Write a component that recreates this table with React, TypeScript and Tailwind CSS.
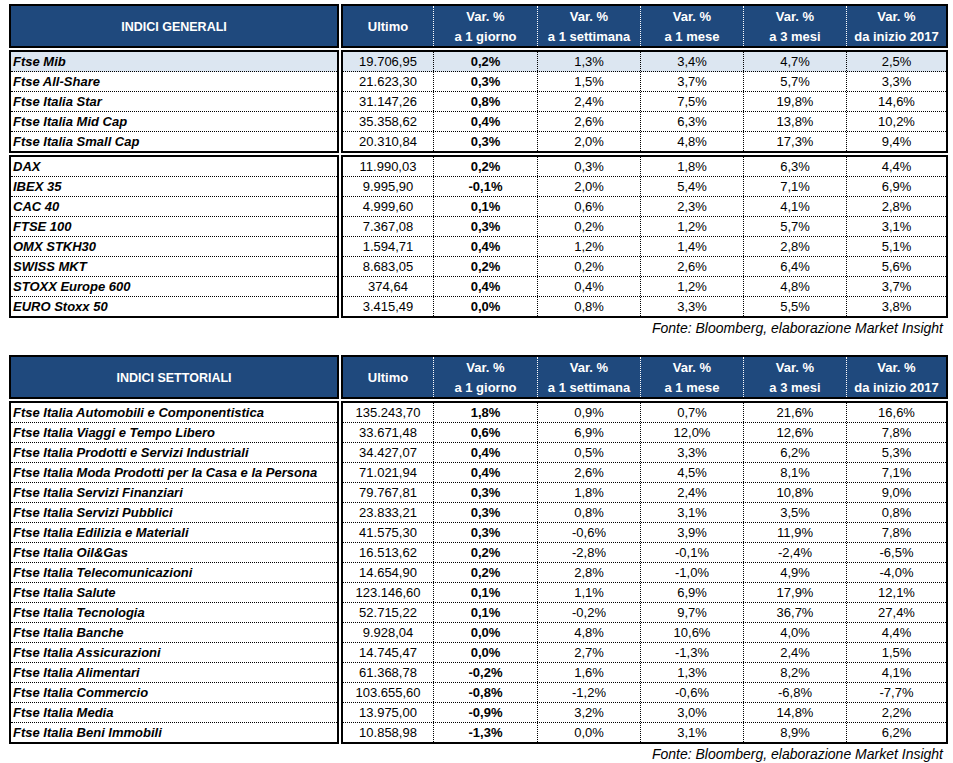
type Row = {
  name: string;
  last: string;
  vals: [string, string, string, string, string];
  hl?: boolean;
};

const r = (name: string, last: string, a: string, b: string, c: string, d: string, e: string, hl = false): Row => ({
  name,
  last,
  vals: [a, b, c, d, e],
  hl,
});

const GENERALI_ITA: Row[] = [
  r('Ftse Mib', '19.706,95', '0,2%', '1,3%', '3,4%', '4,7%', '2,5%', true),
  r('Ftse All-Share', '21.623,30', '0,3%', '1,5%', '3,7%', '5,7%', '3,3%'),
  r('Ftse Italia Star', '31.147,26', '0,8%', '2,4%', '7,5%', '19,8%', '14,6%'),
  r('Ftse Italia Mid Cap', '35.358,62', '0,4%', '2,6%', '6,3%', '13,8%', '10,2%'),
  r('Ftse Italia Small Cap', '20.310,84', '0,3%', '2,0%', '4,8%', '17,3%', '9,4%'),
];

const GENERALI_EU: Row[] = [
  r('DAX', '11.990,03', '0,2%', '0,3%', '1,8%', '6,3%', '4,4%'),
  r('IBEX 35', '9.995,90', '-0,1%', '2,0%', '5,4%', '7,1%', '6,9%'),
  r('CAC 40', '4.999,60', '0,1%', '0,6%', '2,3%', '4,1%', '2,8%'),
  r('FTSE 100', '7.367,08', '0,3%', '0,2%', '1,2%', '5,7%', '3,1%'),
  r('OMX STKH30', '1.594,71', '0,4%', '1,2%', '1,4%', '2,8%', '5,1%'),
  r('SWISS MKT', '8.683,05', '0,2%', '0,2%', '2,6%', '6,4%', '5,6%'),
  r('STOXX Europe 600', '374,64', '0,4%', '0,4%', '1,2%', '4,8%', '3,7%'),
  r('EURO Stoxx 50', '3.415,49', '0,0%', '0,8%', '3,3%', '5,5%', '3,8%'),
];

const SETTORIALI: Row[] = [
  r('Ftse Italia Automobili e Componentistica', '135.243,70', '1,8%', '0,9%', '0,7%', '21,6%', '16,6%'),
  r('Ftse Italia Viaggi e Tempo Libero', '33.671,48', '0,6%', '6,9%', '12,0%', '12,6%', '7,8%'),
  r('Ftse Italia Prodotti e Servizi Industriali', '34.427,07', '0,4%', '0,5%', '3,3%', '6,2%', '5,3%'),
  r('Ftse Italia Moda Prodotti per la Casa e la Persona', '71.021,94', '0,4%', '2,6%', '4,5%', '8,1%', '7,1%'),
  r('Ftse Italia Servizi Finanziari', '79.767,81', '0,3%', '1,8%', '2,4%', '10,8%', '9,0%'),
  r('Ftse Italia Servizi Pubblici', '23.833,21', '0,3%', '0,8%', '3,1%', '3,5%', '0,8%'),
  r('Ftse Italia Edilizia e Materiali', '41.575,30', '0,3%', '-0,6%', '3,9%', '11,9%', '7,8%'),
  r('Ftse Italia Oil&Gas', '16.513,62', '0,2%', '-2,8%', '-0,1%', '-2,4%', '-6,5%'),
  r('Ftse Italia Telecomunicazioni', '14.654,90', '0,2%', '2,8%', '-1,0%', '4,9%', '-4,0%'),
  r('Ftse Italia Salute', '123.146,60', '0,1%', '1,1%', '6,9%', '17,9%', '12,1%'),
  r('Ftse Italia Tecnologia', '52.715,22', '0,1%', '-0,2%', '9,7%', '36,7%', '27,4%'),
  r('Ftse Italia Banche', '9.928,04', '0,0%', '4,8%', '10,6%', '4,0%', '4,4%'),
  r('Ftse Italia Assicurazioni', '14.745,47', '0,0%', '2,7%', '-1,3%', '2,4%', '1,5%'),
  r('Ftse Italia Alimentari', '61.368,78', '-0,2%', '1,6%', '1,3%', '8,2%', '4,1%'),
  r('Ftse Italia Commercio', '103.655,60', '-0,8%', '-1,2%', '-0,6%', '-6,8%', '-7,7%'),
  r('Ftse Italia Media', '13.975,00', '-0,9%', '3,2%', '3,0%', '14,8%', '2,2%'),
  r('Ftse Italia Beni Immobili', '10.858,98', '-1,3%', '0,0%', '3,1%', '8,9%', '6,2%'),
];

const VAR_HEADERS = ['a 1 giorno', 'a 1 settimana', 'a 1 mese', 'a 3 mesi', 'da inizio 2017'];

const COLS = 'grid grid-cols-[91px_104px_103px_103px_103px_1fr]';

function Header({ title }: { title: string }) {
  return (
    <div className="flex gap-[2px]">
      <div className="w-[330px] h-[44px] border-2 border-black bg-[#1f497d] flex items-center justify-center pt-[2px] text-white font-bold text-[12.5px]">
        {title}
      </div>
      <div className={`flex-1 h-[44px] border-2 border-black bg-[#1f497d] text-white font-bold text-[13px] ${COLS}`}>
        <div className="flex items-center justify-center pt-[2px] border-r border-dotted border-white">
          Ultimo
        </div>
        {VAR_HEADERS.map((h, i) => (
          <div
            key={h}
            className={`flex flex-col items-center ${i < 4 ? 'border-r border-dotted border-white' : ''}`}
          >
            <span className="h-[20px] leading-[21px]">Var. %</span>
            <span className="h-[20px] leading-[22px]">{h}</span>
          </div>
        ))}
      </div>
    </div>
  );
}

function Group({ rows }: { rows: Row[] }) {
  return (
    <div className="flex gap-[2px]">
      <div className="w-[330px] border-2 border-black">
        {rows.map((row, i) => {
          const isLast = i === rows.length - 1;
          return (
            <div
              key={row.name}
              className={`pl-[2px] font-bold italic text-[13px] whitespace-nowrap ${
                isLast ? 'h-[19px] leading-[19px]' : 'h-[20px] leading-[19px] border-b border-dotted border-black'
              } ${row.hl ? 'bg-[#dce6f1]' : ''}`}
            >
              {row.name}
            </div>
          );
        })}
      </div>
      <div className="flex-1 border-2 border-black">
        {rows.map((row, i) => {
          const isLast = i === rows.length - 1;
          return (
            <div
              key={row.name}
              className={`${COLS} text-[13px] text-center ${
                isLast ? 'h-[19px] leading-[19px]' : 'h-[20px] leading-[19px] border-b border-dotted border-black'
              } ${row.hl ? 'bg-[#dce6f1]' : ''}`}
            >
              <div className="border-r border-dotted border-black">{row.last}</div>
              {row.vals.map((v, j) => (
                <div
                  key={j}
                  className={`${j === 0 ? 'font-bold' : ''} ${j < 4 ? 'border-r border-dotted border-black' : ''}`}
                >
                  {v}
                </div>
              ))}
            </div>
          );
        })}
      </div>
    </div>
  );
}

function Fonte() {
  return (
    <div className="h-[20px] leading-[20px] pr-[5px] text-right italic text-[14px]">
      Fonte: Bloomberg, elaborazione Market Insight
    </div>
  );
}

export default function App() {
  return (
    <div className="w-[953px] h-[763px] bg-white text-black pt-[4px] pl-[9px] pr-[5px] font-['Liberation_Sans',Arial,sans-serif]">
      <div className="flex flex-col gap-[2px]">
        <Header title="INDICI GENERALI" />
        <Group rows={GENERALI_ITA} />
        <Group rows={GENERALI_EU} />
      </div>
      <Fonte />
      <div className="mt-[17px] flex flex-col gap-[2px]">
        <Header title="INDICI SETTORIALI" />
        <Group rows={SETTORIALI} />
      </div>
      <Fonte />
    </div>
  );
}
